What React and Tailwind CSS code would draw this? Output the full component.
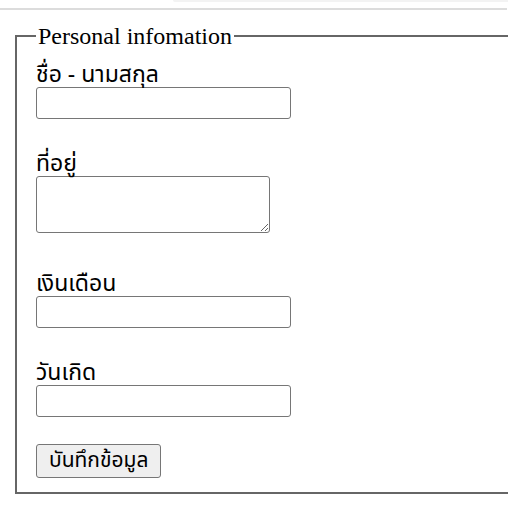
export default function App() {
  const field = "block w-[255px] h-[32px] border border-[#767676] rounded-[3px] bg-white";
  const label = "block text-[23px] leading-[24px] text-black whitespace-nowrap";
  return (
    <div className="w-[508px] h-[526px] bg-white overflow-hidden relative" style={{ fontFamily: "Tahoma, 'Noto Sans Thai', 'Noto Sans', sans-serif" }}>
      <div className="h-[8px] flex">
        <div className="w-[173px]" />
        <div className="flex-1 h-[2px] bg-[#f3f3f3] rounded-bl-[8px]" />
      </div>
      <div className="h-[2px] bg-[#dcdcdc] w-[507px]" />
      <fieldset className="ml-[15px] mt-[14px] w-[540px] border-2 border-[#666666] pl-[19px] pr-4 pt-0 pb-[14px]">
        <legend className="px-[2px] text-[24px] leading-[24px] text-black" style={{ fontFamily: "'Liberation Serif', serif" }}>
          Personal infomation
        </legend>
        <label className={label + " mt-[15px]"}>ชื่อ - นามสกุล</label>
        <input type="text" className={field} />
        <label className={label + " mt-[33px]"}>ที่อยู่</label>
        <textarea className="block w-[234px] h-[57px] border border-[#767676] rounded-[3px] bg-white resize" />
        <label className={label + " mt-[39px]"}>เงินเดือน</label>
        <input type="text" className={field} />
        <label className={label + " mt-[33px]"}>วันเกิด</label>
        <input type="text" className={field} />
        <button type="button" className="mt-[27px] block h-[34px] px-[12px] border border-[#767676] rounded-[3px] bg-[#efefef] text-[21px] leading-[24px] text-black">
          บันทึกข้อมูล
        </button>
      </fieldset>
    </div>
  );
}
